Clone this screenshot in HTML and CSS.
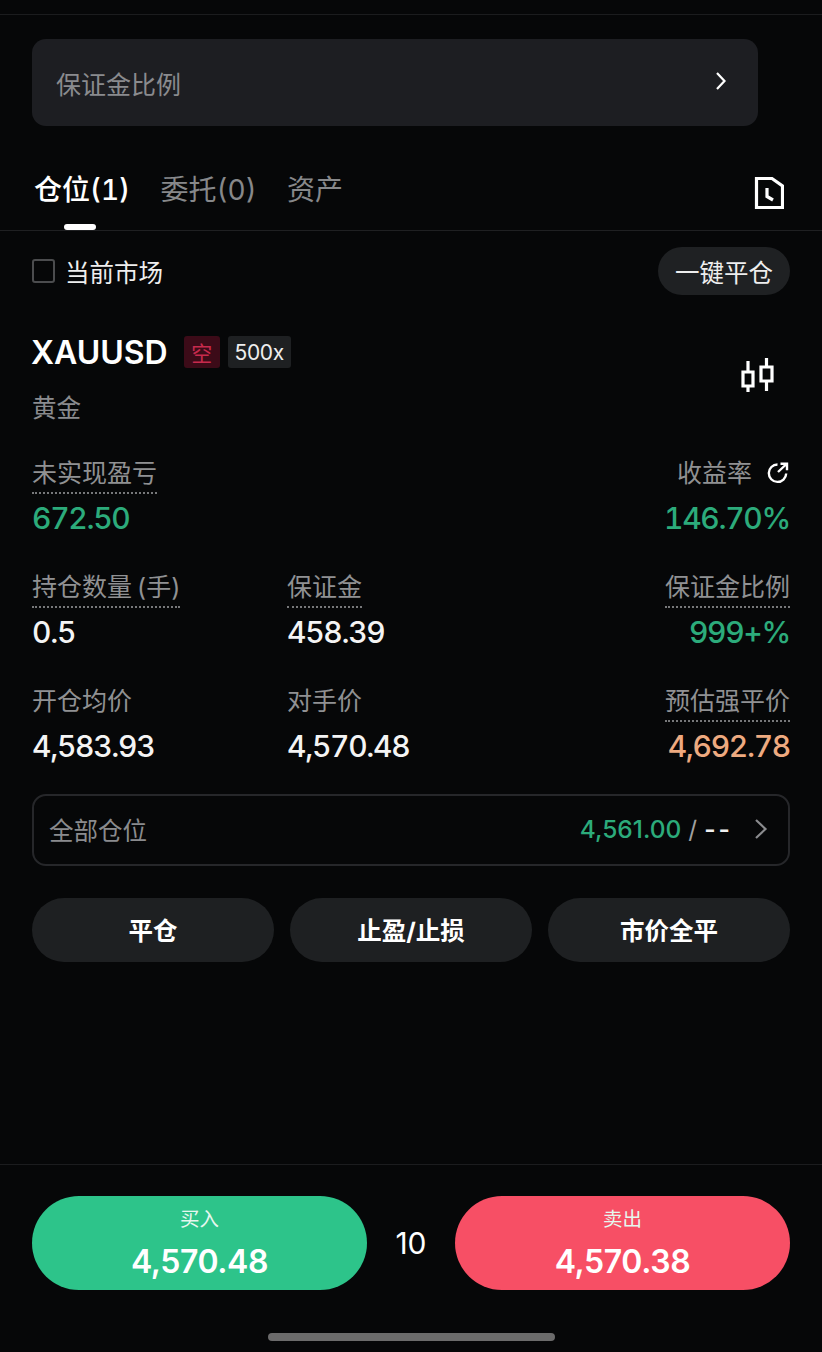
FILE: index.html
```html
<!DOCTYPE html>
<html lang="zh-CN">
<head>
<meta charset="UTF-8" />
<meta name="viewport" content="width=device-width, initial-scale=1" />
<title>仓位</title>
<link rel="stylesheet" href="styles.css">
</head>
<body>

<div class="page">
  <div class="status-line"></div>

  <div class="margin-box">
    <span>保证金比例</span>
    <svg class="margin-chevron" width="12" height="20" viewBox="0 0 12 20"><path d="M2 2l7.500 8L2 18" /></svg>
  </div>

  <!-- Tabs -->
  <div class="tabs">
    <div class="tab active">仓位(1)</div>
    <div class="tab">委托(0)</div>
    <div class="tab">资产</div>
    <svg class="history-icon" width="30" height="34" viewBox="0 0 30 34">
      <path d="M2.500 2.500H18L28.500 10v21.500h-26z" />
      <path d="M13 12v8.500l6 3.500" />
    </svg>
  </div>

  <div class="filter-row">
    <label class="check"><span class="check-box"></span>当前市场</label>
    <div class="close-all">一键平仓</div>
  </div>

  <!-- Position card -->
  <div class="symbol-row">
    <div class="symbol-left">
      <div class="symbol-line">
        <span class="symbol">XAUUSD</span>
        <span class="tag tag-short">空</span>
        <span class="tag tag-lev">500x</span>
      </div>
      <div class="symbol-name">黄金</div>
    </div>
    <svg class="candle-icon" width="34" height="36" viewBox="0 0 34 36">
      <path d="M2 15h10v14H2zM7 4v11M7 29v6M20 10h11v14H20zM25.500 1v9M25.500 24v10" />
    </svg>
  </div>

  <div class="stats">
    <div class="stat">
      <div class="label dotted">未实现盈亏</div>
      <div class="value green">672.50</div>
    </div>
    <div class="stat"></div>
    <div class="stat right">
      <div class="label"><span>收益率</span>
        <svg class="share-icon" width="22" height="22" viewBox="0 0 22 22">
          <path d="M10.500 2.500a8.700 8.700 0 1 0 8.700 9" />
          <path d="M11 10l8.500-8M13.500 1.800H20v6.500" />
        </svg>
      </div>
      <div class="value green">146.70%</div>
    </div>

    <div class="stat">
      <div class="label dotted">持仓数量 (手)</div>
      <div class="value">0.5</div>
    </div>
    <div class="stat">
      <div class="label dotted">保证金</div>
      <div class="value">458.39</div>
    </div>
    <div class="stat right">
      <div class="label dotted">保证金比例</div>
      <div class="value green">999+%</div>
    </div>

    <div class="stat">
      <div class="label">开仓均价</div>
      <div class="value">4,583.93</div>
    </div>
    <div class="stat">
      <div class="label">对手价</div>
      <div class="value">4,570.48</div>
    </div>
    <div class="stat right">
      <div class="label dotted">预估强平价</div>
      <div class="value orange">4,692.78</div>
    </div>
  </div>

  <div class="all-positions">
    <span class="all-label">全部仓位</span>
    <span class="all-right">
      <span class="all-price">4,561.00</span>
      <span class="all-slash">/</span>
      <span class="all-dash">--</span>
      <svg class="all-chevron" width="14" height="22" viewBox="0 0 14 22"><path d="M2 2l9.500 9L2 20" /></svg>
    </span>
  </div>

  <div class="actions">
    <div class="action">平仓</div>
    <div class="action">止盈/止损</div>
    <div class="action">市价全平</div>
  </div>

  <div class="spacer"></div>

  <!-- Buy / sell -->
  <div class="trade-bar">
    <div class="trade buy">
      <span class="trade-label">买入</span>
      <span class="trade-price">4,570.48</span>
    </div>
    <div class="spread">10</div>
    <div class="trade sell">
      <span class="trade-label">卖出</span>
      <span class="trade-price">4,570.38</span>
    </div>
  </div>

  <div class="home-handle"></div>
</div>

</body>
</html>
```

FILE: styles.css
```css
html, body {
  margin: 0;
  background: #060708;
  height: 100%;
  font-family: Inter, 'Noto Sans CJK SC', sans-serif;
  color: #fff;
}

svg {
  fill: none;
  stroke: currentColor;
  flex: none;
}

.page {
  display: flex;
  flex-direction: column;
  height: 1352px;
  overflow: hidden;
}

.status-line {
  height: 14px;
  border-bottom: 1px solid #1b1c1e;
  flex: none;
}

.margin-box {
  display: flex;
  align-items: center;
  justify-content: space-between;
  height: 87px;
  margin: 24px 64px 0 32px;
  padding: 0 31px 0 24px;
  box-sizing: border-box;
  background: #1d1e22;
  border-radius: 14px;
  font-size: 25px;
  color: #8a8b8e;
  flex: none;
}

.margin-chevron {
  stroke: #fff;
  stroke-width: 2.200;
  margin-top: -4px;
}

.tabs {
  display: flex;
  align-items: flex-start;
  gap: 30.500px;
  height: 105px;
  padding: 44px 38px 0 34px;
  box-sizing: border-box;
  border-bottom: 1px solid #1f2022;
  flex: none;
}

.tab {
  font-size: 28px;
  line-height: 40px;
  color: #87888a;
  font-variant-numeric: tabular-nums;
}

.tab.active {
  color: #fff;
  font-weight: 500;
  position: relative;
  align-self: stretch;
}

.tab.active::after {
  content: '';
  position: absolute;
  left: 30px;
  bottom: 0;
  width: 32px;
  height: 6px;
  border-radius: 3px;
  background: #fff;
}

.history-icon {
  margin-left: auto;
  margin-top: 6px;
  stroke: #fff;
  stroke-width: 3.200;
}

.filter-row {
  display: flex;
  align-items: center;
  justify-content: space-between;
  margin-top: 16px;
  padding: 0 32px;
  height: 48px;
  flex: none;
}

.check {
  display: flex;
  align-items: center;
  gap: 10px;
  font-size: 24.500px;
  color: #eeeeee;
}

.check-box {
  width: 23px;
  height: 24px;
  box-sizing: border-box;
  border: 2px solid #4b4c4e;
  border-radius: 3px;
}

.close-all {
  display: flex;
  align-items: center;
  justify-content: center;
  width: 132px;
  height: 48px;
  border-radius: 24px;
  background: #1f2123;
  font-size: 24.500px;
  color: #eeeeee;
}

.symbol-row {
  display: flex;
  justify-content: space-between;
  margin-top: 36px;
  padding: 0 32px;
  flex: none;
}

.symbol-line {
  display: flex;
  align-items: center;
  gap: 8px;
  height: 42px;
}

.symbol {
  font-size: 32px;
  font-weight: 600;
  margin: 0 8px 0 -1px;
}

.tag {
  display: flex;
  align-items: center;
  justify-content: center;
  height: 32px;
  border-radius: 3px;
  font-size: 21px;
}

.tag-short {
  width: 36px;
  background: #3c0b18;
  color: #c72a4d;
}

.tag-lev {
  width: 63px;
  background: #1e2022;
  color: #eeeeee;
  letter-spacing: -0.300px;
}

.symbol-name {
  margin-top: 17px;
  font-size: 24.500px;
  line-height: 36px;
  color: #8a8b8e;
}

.candle-icon {
  margin: 26px 15px 0 0;
  stroke: #fff;
  stroke-width: 3.200;
}

.stats {
  display: grid;
  grid-template-columns: 255px 1fr auto;
  row-gap: 29px;
  margin-top: 29px;
  padding: 0 32px;
  flex: none;
}

.stat.right {
  display: flex;
  flex-direction: column;
  align-items: flex-end;
}

.label {
  display: flex;
  align-items: center;
  width: fit-content;
  height: 36px;
  padding-bottom: 3px;
  font-size: 25px;
  line-height: 36px;
  color: #909193;
  word-spacing: -2px;
}

.label.dotted {
  border-bottom: 2px dotted #77787a;
  padding-bottom: 1px;
}

.share-icon {
  margin: 0 1px 0 15px;
  color: #fff;
  stroke-width: 2.400;
}

.value {
  font-size: 30px;
  font-weight: 500;
  line-height: 44px;
  margin-top: 2px;
  letter-spacing: -1.300px;
  color: #f4f4f4;
  font-variant-numeric: tabular-nums;
}

.green {
  color: #2cab7b;
}

.orange {
  color: #eeaa80;
}

.all-positions {
  display: flex;
  align-items: center;
  justify-content: space-between;
  height: 72px;
  margin: 26px 32px 0;
  padding: 0 20px 2px 15px;
  box-sizing: border-box;
  border: 2px solid #26272a;
  border-radius: 14px;
  flex: none;
}

.all-label {
  font-size: 24.500px;
  color: #8a8b8e;
}

.all-right {
  display: flex;
  align-items: center;
  gap: 7px;
  font-size: 24.500px;
}

.all-price {
  color: #2cab7b;
  font-weight: 500;
}

.all-slash {
  color: #a0a0a0;
}

.all-dash {
  color: #f0f0f0;
  letter-spacing: 3px;
  font-weight: 600;
}

.all-chevron {
  margin-left: 14px;
  color: #8a8b8e;
  stroke-width: 2.200;
}

.actions {
  display: flex;
  gap: 16px;
  margin-top: 32px;
  padding: 0 32px;
  flex: none;
}

.action {
  flex: 1;
  display: flex;
  align-items: center;
  justify-content: center;
  height: 64px;
  padding-bottom: 2px;
  box-sizing: border-box;
  border-radius: 32px;
  background: #1e2022;
  font-size: 24.500px;
  font-weight: 700;
}

.spacer {
  flex: 1;
}

.trade-bar {
  display: flex;
  align-items: flex-start;
  height: 126px;
  padding: 31px 32px 0;
  box-sizing: border-box;
  border-top: 1px solid #1b1c1e;
  flex: none;
}

.trade {
  display: flex;
  flex-direction: column;
  align-items: center;
  width: 335px;
  height: 94px;
  box-sizing: border-box;
  padding-top: 8px;
  border-radius: 47px;
}

.buy {
  background: #2dc48a;
}

.sell {
  background: #f74f65;
}

.trade-label {
  font-size: 19.500px;
  line-height: 30px;
  color: #e6f7ef;
}

.trade-price {
  font-size: 32px;
  font-weight: 600;
  line-height: 44px;
  margin-top: 6px;
  letter-spacing: -0.400px;
}

.spread {
  flex: 1;
  text-align: center;
  font-size: 30px;
  line-height: 94px;
}

.home-handle {
  width: 287px;
  height: 8px;
  margin: 43px auto 11px;
  border-radius: 4px;
  background: #6b6b6b;
  flex: none;
}
```
